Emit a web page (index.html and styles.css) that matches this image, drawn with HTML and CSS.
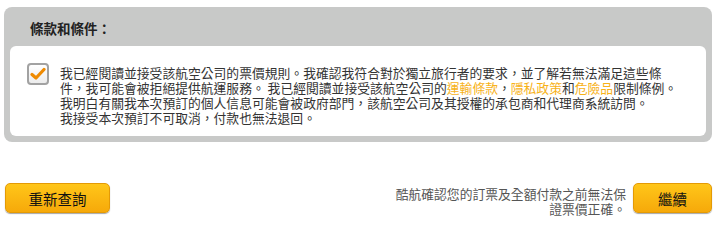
FILE: index.html
```html
<!DOCTYPE html>
<html lang="zh-Hant">
<head>
<meta charset="utf-8">
<link rel="stylesheet" href="styles.css">
</head>
<body>
<div class="page">
  <section class="panel">
    <h2 class="panel-title">條款和條件：</h2>
    <div class="terms">
      <span class="checkbox">
        <svg width="16" height="14" viewBox="0 0 16 14"><path d="M2 7.5 L6 11 L14 2.5" fill="none" stroke="#ef8a00" stroke-width="3.2" stroke-linecap="round" stroke-linejoin="round"/></svg>
      </span>
      <p class="terms-text">我已經閱讀並接受該航空公司的票價規則。我確認我符合對於獨立旅行者的要求，並了解若無法滿足這些條件，我可能會被拒絕提供航運服務。 我已經閱讀並接受該航空公司的<a class="link">運輸條款</a>，<a class="link">隱私政策</a>和<a class="link">危險品</a>限制條例。<br>我明白有關我本次預訂的個人信息可能會被政府部門，該航空公司及其授權的承包商和代理商系統訪問。<br>我接受本次預訂不可取消，付款也無法退回。</p>
    </div>
  </section>
  <div class="actions">
    <button class="btn btn-back">重新查詢</button>
    <div class="actions-right">
      <p class="note">酷航確認您的訂票及全額付款之前無法保<br>證票價正確。</p>
      <button class="btn btn-next">繼續</button>
    </div>
  </div>
</div>
</body>
</html>
```
FILE: styles.css
```css
html, body {
  margin: 0;
  padding: 0;
  background: #ffffff;
}
body {
  font-family: "Noto Sans CJK TC", "Liberation Sans", sans-serif;
  color: #333333;
}
.page {
  padding: 7px 8px 0 4px;
  width: 708px;
}
.panel {
  background: #c8c9c8;
  border-radius: 8px;
  padding: 0 6px 6px 6px;
}
.panel-title {
  margin: 0;
  padding: 14px 0 0 20px;
  height: 25px;
  font-size: 13.5px;
  line-height: 15px;
  font-weight: bold;
  color: #222222;
}
.terms {
  background: #ffffff;
  border-radius: 6px;
  display: flex;
  align-items: flex-start;
  padding: 17px 8px 11px 17px;
  gap: 11px;
}
.checkbox {
  flex: none;
  width: 18px;
  height: 18px;
  border: 2px solid #a2a2a2;
  border-radius: 4px;
  background: linear-gradient(#ffffff, #ececec);
  display: flex;
  align-items: center;
  justify-content: center;
}
.terms-text {
  margin: 2px 0 0 0;
  width: 621px;
  font-size: 12.8px;
  line-height: 15px;
  color: #333333;
}
.link {
  color: #f7b219;
}
.actions {
  margin-top: 41px;
  display: flex;
  justify-content: space-between;
  align-items: flex-start;
  padding-left: 1px;
}
.actions-right {
  display: flex;
  align-items: flex-start;
  gap: 7px;
}
.note {
  margin: 3px 0 0 0;
  text-align: right;
  font-size: 12.8px;
  line-height: 15px;
  color: #555555;
}
.btn {
  font-family: inherit;
  font-size: 14.5px;
  color: #111111;
  height: 30px;
  border: 1px solid #e49a05;
  border-radius: 5px;
  background: linear-gradient(#ffc619, #f6a90a);
  box-shadow: 0 1px 1px rgba(0,0,0,0.35);
  padding: 0;
}
.btn-back {
  width: 105px;
}
.btn-next {
  width: 79px;
}
```
